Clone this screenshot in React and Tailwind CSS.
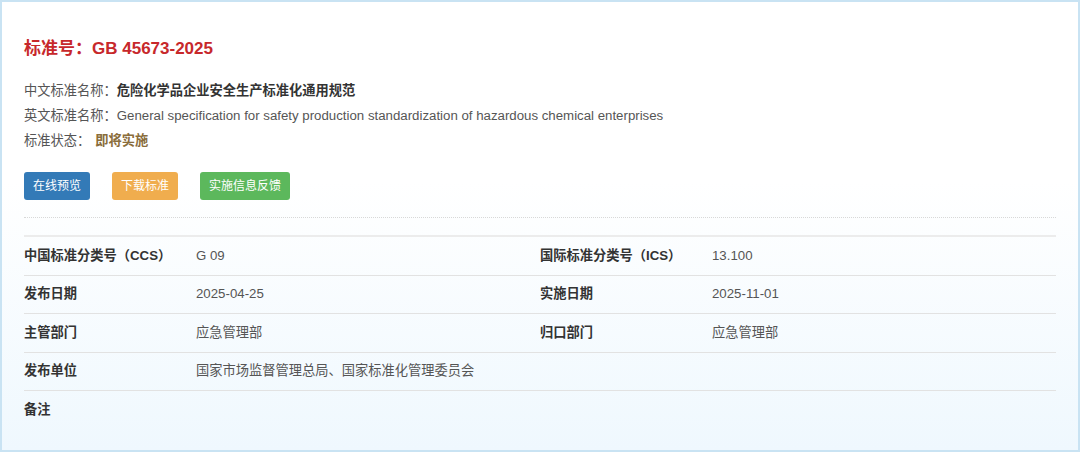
export default function App() {
  const font = { fontFamily: '"Liberation Sans", Arial, "Noto Sans CJK SC", sans-serif' };
  const rows = [
    [["中国标准分类号（CCS）", "G 09"], ["国际标准分类号（ICS）", "13.100"]],
    [["发布日期", "2025-04-25"], ["实施日期", "2025-11-01"]],
    [["主管部门", "应急管理部"], ["归口部门", "应急管理部"]],
    [["发布单位", "国家市场监督管理总局、国家标准化管理委员会"]],
    [["备注", ""]],
  ];
  return (
    <div style={font} className="w-[1080px] h-[452px] bg-white">
      <div className="h-[452px] border-2 border-[#c9e3f3] bg-gradient-to-b from-white from-40% to-[#eff8fe] px-[22px] pt-[35px]">
        <div className="text-[17px] leading-6 font-bold text-[#c7282b]">标准号：GB 45673-2025</div>
        <div className="mt-[17px] text-[13.25px] leading-[25px] text-[#555]">
          <div>中文标准名称：<span className="font-bold text-[#333]">危险化学品企业安全生产标准化通用规范</span></div>
          <div>英文标准名称：General specification for safety production standardization of hazardous chemical enterprises</div>
          <div>标准状态：<span className="ml-[5px] font-bold text-[#8a6d3b]">即将实施</span></div>
        </div>
        <div className="mt-[19px] flex gap-[22px] text-[12px] text-white">
          <div className="h-[28px] px-[9px] flex items-center rounded-[3px] bg-[#337ab7]">在线预览</div>
          <div className="h-[28px] px-[9px] flex items-center rounded-[3px] bg-[#f0ad4e]">下载标准</div>
          <div className="h-[28px] px-[9px] flex items-center rounded-[3px] bg-[#5cb85c]">实施信息反馈</div>
        </div>
        <div className="mt-[17px] border-t border-dotted border-[#d8d8d8] w-[1032px]"></div>
        <div className="mt-[17px] w-[1032px] border-t-2 border-[#ececec] text-[13.25px]">
          {rows.map((r, i) => (
            <div key={i} className={"flex h-[38.5px] items-center " + (i < rows.length - 1 ? "border-b border-[#e2e2e2]" : "")}>
              {r.map(([k, v], j) => (
                <div key={j} className="flex w-[516px] items-center">
                  <div className="w-[172px] font-bold text-[#333]">{k}</div>
                  <div className="text-[#555]">{v}</div>
                </div>
              ))}
            </div>
          ))}
        </div>
      </div>
    </div>
  );
}
